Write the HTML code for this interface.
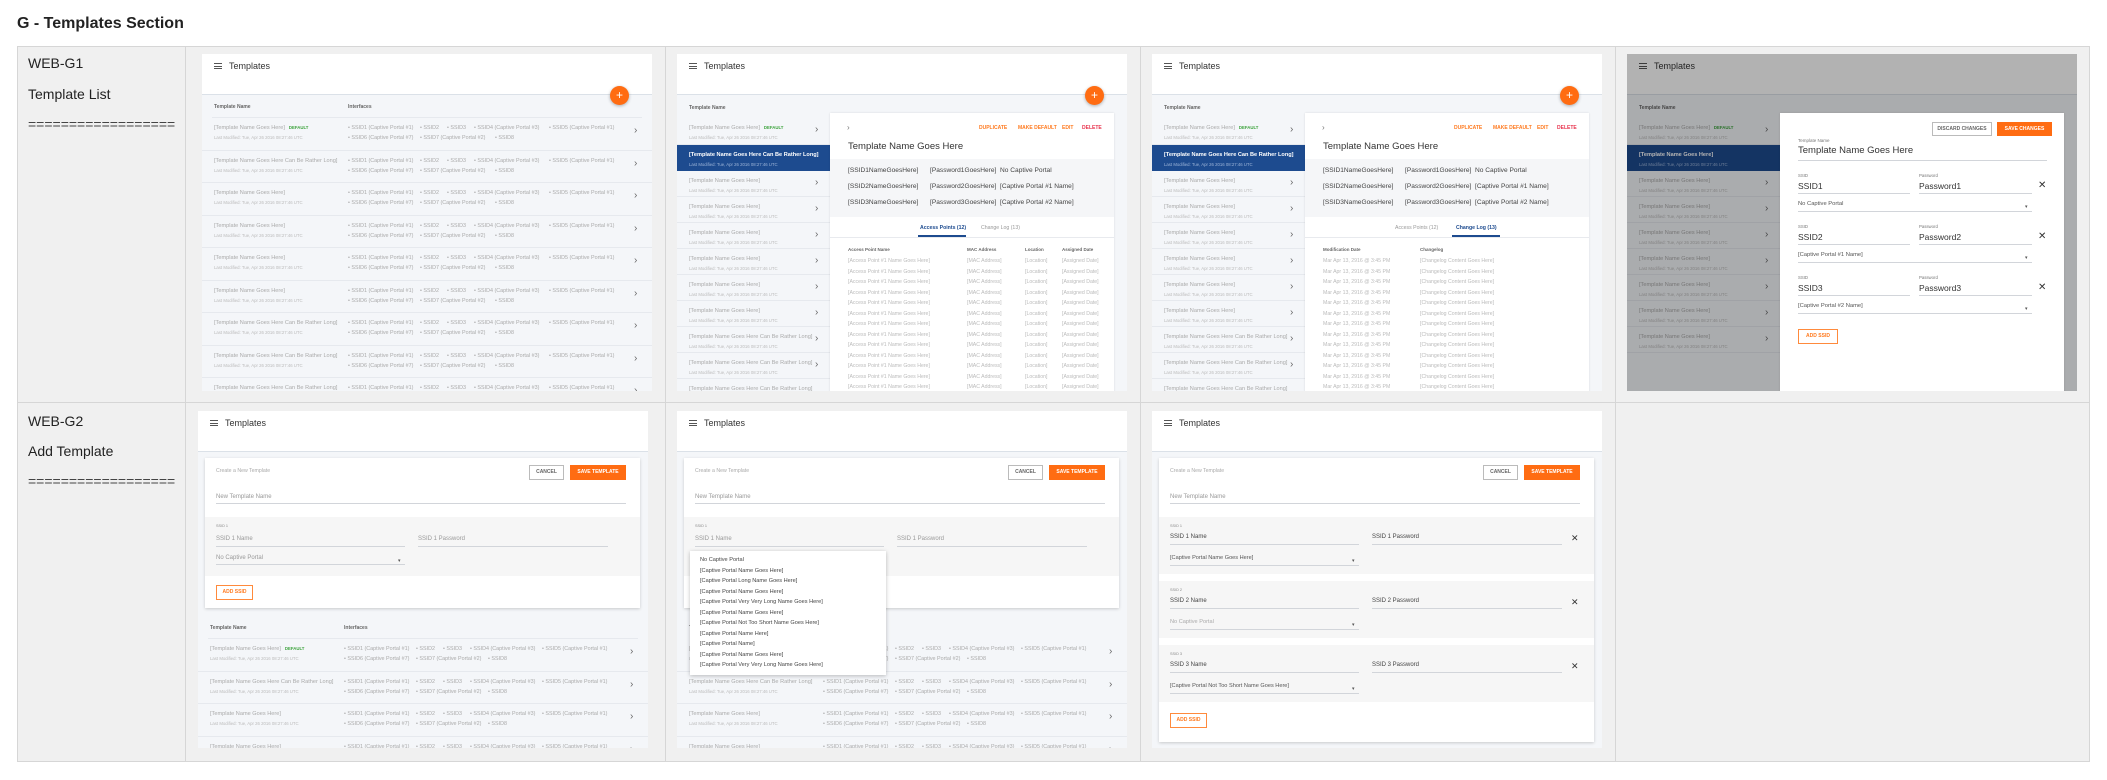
<!DOCTYPE html>
<html><head><meta charset="utf-8">
<style>
*{margin:0;padding:0;box-sizing:border-box}
body{width:2107px;height:780px;background:#fff;font-family:"Liberation Sans",Arial,sans-serif;position:relative;overflow:hidden;color:#333}
.a{position:absolute}
.t{position:absolute;white-space:nowrap;line-height:10px}
h1{position:absolute;left:17px;top:14px;font-size:16px;font-weight:bold;color:#222;line-height:20px}
.grid{position:absolute;left:17px;top:46px;width:2073px;height:716px;background:#f0f0f0;border:1px solid #d6d6d6}
.vl{position:absolute;top:46px;width:1px;height:716px;background:#d6d6d6}
.hl{position:absolute;left:17px;top:402px;width:2073px;height:1px;background:#d6d6d6}
.lab{position:absolute;left:28px;font-size:14px;color:#222;line-height:16px;white-space:nowrap}
.card{position:absolute;width:450px;height:337px;background:#f4f6f9;overflow:hidden}
.hd{position:absolute;left:0;top:0;width:450px;height:41px;background:#fff;border-bottom:1px solid #dbe1e8}
.hb{position:absolute;left:12px;top:9px;width:8px;height:6px;border-top:1px solid #555;border-bottom:1px solid #555}
.hb:after{content:"";position:absolute;left:0;top:2px;width:8px;height:1px;background:#555}
.ht{position:absolute;left:27px;top:6px;font-size:9px;color:#333;line-height:12px}
.fab{position:absolute;width:19px;height:19px;border-radius:50%;background:#ff6c12;color:#fff;font-size:12px;line-height:19px;text-align:center;box-shadow:0 1px 3px rgba(0,0,0,.3)}
.th{position:absolute;font-size:5px;font-weight:bold;color:#666;line-height:8px;white-space:nowrap}
.r{position:absolute;left:0;width:450px;height:32.5px;border-bottom:1px solid #e6e9ee}
.n{position:absolute;left:12px;top:5px;font-size:5.6px;color:#aaa;line-height:10px;white-space:nowrap}
.m{position:absolute;left:12px;top:15px;font-size:4.3px;color:#bbb;line-height:10px;white-space:nowrap}
.df{color:#3ca33c;font-weight:bold;font-size:4.3px;margin-left:4px}
.i1,.i2{position:absolute;left:146px;font-size:5.4px;color:#aaa;line-height:10px;white-space:nowrap}
.i1{top:5px}.i2{top:15px}
.i1 span,.i2 span{display:inline-block}
.ch{position:absolute;left:432px;top:8px;font-size:10px;color:#666;line-height:10px;font-style:normal}
.sr{position:absolute;left:0;width:153px;height:26px;border-bottom:1px solid #e6e9ee}
.sr .ch{left:138px;top:7px}
.sel{background:#1d4b8f;border:none}
.sel .n{color:#fff;font-weight:bold}.sel .m{color:#9fb6d9}
.pn{position:absolute;left:153px;top:59px;width:284px;height:290px;background:#fff;box-shadow:0 0 2px rgba(0,0,0,.12)}
.act{position:absolute;top:10px;font-size:5px;font-weight:bold;color:#ff7a1f;line-height:10px}
.gb{position:absolute;left:0;top:46px;width:284px;height:58px;background:#f5f6f8}
.s7{position:absolute;font-size:6.6px;color:#444;line-height:10px;white-space:nowrap}
.tab{position:absolute;top:110px;font-size:5.2px;color:#999;line-height:10px;white-space:nowrap}
.tr{position:absolute;font-size:5.2px;color:#bbb;line-height:10.5px;white-space:nowrap}
.btn{position:absolute;font-size:5px;font-weight:bold;text-align:center;line-height:13px;white-space:nowrap}
.bo{border:1px solid #bbb;color:#666;background:#fff}
.bf{background:#ff6c12;color:#fff;line-height:15px}
.bad{border:1px solid #ff8a3c;color:#ff7a1f;background:#fff}
.ul{position:absolute;height:1px;background:#d2d5da}
.x{position:absolute;font-size:10px;color:#333;line-height:10px}
.dd{position:absolute;font-size:5px;color:#555;line-height:6px}
.fc{position:absolute;left:7px;top:47px;width:435px;background:#fff;box-shadow:0 1px 3px rgba(0,0,0,.18)}
.gs{position:absolute;left:0;width:435px;background:#f6f6f6}
.menu{position:absolute;left:13px;top:140px;width:196px;height:124px;background:#fff;box-shadow:0 1px 4px rgba(0,0,0,.25);z-index:5}
.menu div{position:absolute;left:10px;font-size:5.6px;color:#444;line-height:10.5px;white-space:nowrap}
</style></head><body>
<h1>G - Templates Section</h1>
<div class="grid"></div>
<div class="vl" style="left:185px"></div>
<div class="vl" style="left:665px"></div>
<div class="vl" style="left:1140px"></div>
<div class="vl" style="left:1615px"></div>
<div class="hl"></div>
<div class="lab" style="top:55px">WEB-G1</div>
<div class="lab" style="top:86px">Template List</div>
<div class="lab" style="top:116px;color:#444">==================</div>
<div class="lab" style="top:413px">WEB-G2</div>
<div class="lab" style="top:443px">Add Template</div>
<div class="lab" style="top:473px;color:#444">==================</div>

<!-- ROW1 CARD1 -->
<div class="card" style="left:202px;top:54px">
<div class="hd"><div class="hb"></div><div class="ht">Templates</div></div>
<div class="fab" style="left:408px;top:32px">+</div>
<div class="th" style="left:12px;top:49px">Template Name</div><div class="th" style="left:146px;top:49px">Interfaces</div>
<div class="a" style="left:10px;top:63px;width:430px;height:1px;background:#e6e9ee"></div>
<div class="r" style="top:64px"><div class="n">[Template Name Goes Here]<span class="df">DEFAULT</span></div><div class="m">Last Modified: Tue, Apr 26 2016 08:27:46 UTC</div><div class="i1"><span style="width:72px">• SSID1 (Captive Portal #1)</span><span style="width:27px">• SSID2</span><span style="width:27px">• SSID3</span><span style="width:75px">• SSID4 (Captive Portal #3)</span><span>• SSID5 (Captive Portal #1)</span></div><div class="i2"><span style="width:72px">• SSID6 (Captive Portal #7)</span><span style="width:75px">• SSID7 (Captive Portal #2)</span><span>• SSID8</span></div><i class="ch">›</i></div>
<div class="r" style="top:96.5px"><div class="n">[Template Name Goes Here Can Be Rather Long]</div><div class="m">Last Modified: Tue, Apr 26 2016 08:27:46 UTC</div><div class="i1"><span style="width:72px">• SSID1 (Captive Portal #1)</span><span style="width:27px">• SSID2</span><span style="width:27px">• SSID3</span><span style="width:75px">• SSID4 (Captive Portal #3)</span><span>• SSID5 (Captive Portal #1)</span></div><div class="i2"><span style="width:72px">• SSID6 (Captive Portal #7)</span><span style="width:75px">• SSID7 (Captive Portal #2)</span><span>• SSID8</span></div><i class="ch">›</i></div>
<div class="r" style="top:129px"><div class="n">[Template Name Goes Here]</div><div class="m">Last Modified: Tue, Apr 26 2016 08:27:46 UTC</div><div class="i1"><span style="width:72px">• SSID1 (Captive Portal #1)</span><span style="width:27px">• SSID2</span><span style="width:27px">• SSID3</span><span style="width:75px">• SSID4 (Captive Portal #3)</span><span>• SSID5 (Captive Portal #1)</span></div><div class="i2"><span style="width:72px">• SSID6 (Captive Portal #7)</span><span style="width:75px">• SSID7 (Captive Portal #2)</span><span>• SSID8</span></div><i class="ch">›</i></div>
<div class="r" style="top:161.5px"><div class="n">[Template Name Goes Here]</div><div class="m">Last Modified: Tue, Apr 26 2016 08:27:46 UTC</div><div class="i1"><span style="width:72px">• SSID1 (Captive Portal #1)</span><span style="width:27px">• SSID2</span><span style="width:27px">• SSID3</span><span style="width:75px">• SSID4 (Captive Portal #3)</span><span>• SSID5 (Captive Portal #1)</span></div><div class="i2"><span style="width:72px">• SSID6 (Captive Portal #7)</span><span style="width:75px">• SSID7 (Captive Portal #2)</span><span>• SSID8</span></div><i class="ch">›</i></div>
<div class="r" style="top:194px"><div class="n">[Template Name Goes Here]</div><div class="m">Last Modified: Tue, Apr 26 2016 08:27:46 UTC</div><div class="i1"><span style="width:72px">• SSID1 (Captive Portal #1)</span><span style="width:27px">• SSID2</span><span style="width:27px">• SSID3</span><span style="width:75px">• SSID4 (Captive Portal #3)</span><span>• SSID5 (Captive Portal #1)</span></div><div class="i2"><span style="width:72px">• SSID6 (Captive Portal #7)</span><span style="width:75px">• SSID7 (Captive Portal #2)</span><span>• SSID8</span></div><i class="ch">›</i></div>
<div class="r" style="top:226.5px"><div class="n">[Template Name Goes Here]</div><div class="m">Last Modified: Tue, Apr 26 2016 08:27:46 UTC</div><div class="i1"><span style="width:72px">• SSID1 (Captive Portal #1)</span><span style="width:27px">• SSID2</span><span style="width:27px">• SSID3</span><span style="width:75px">• SSID4 (Captive Portal #3)</span><span>• SSID5 (Captive Portal #1)</span></div><div class="i2"><span style="width:72px">• SSID6 (Captive Portal #7)</span><span style="width:75px">• SSID7 (Captive Portal #2)</span><span>• SSID8</span></div><i class="ch">›</i></div>
<div class="r" style="top:259px"><div class="n">[Template Name Goes Here Can Be Rather Long]</div><div class="m">Last Modified: Tue, Apr 26 2016 08:27:46 UTC</div><div class="i1"><span style="width:72px">• SSID1 (Captive Portal #1)</span><span style="width:27px">• SSID2</span><span style="width:27px">• SSID3</span><span style="width:75px">• SSID4 (Captive Portal #3)</span><span>• SSID5 (Captive Portal #1)</span></div><div class="i2"><span style="width:72px">• SSID6 (Captive Portal #7)</span><span style="width:75px">• SSID7 (Captive Portal #2)</span><span>• SSID8</span></div><i class="ch">›</i></div>
<div class="r" style="top:291.5px"><div class="n">[Template Name Goes Here Can Be Rather Long]</div><div class="m">Last Modified: Tue, Apr 26 2016 08:27:46 UTC</div><div class="i1"><span style="width:72px">• SSID1 (Captive Portal #1)</span><span style="width:27px">• SSID2</span><span style="width:27px">• SSID3</span><span style="width:75px">• SSID4 (Captive Portal #3)</span><span>• SSID5 (Captive Portal #1)</span></div><div class="i2"><span style="width:72px">• SSID6 (Captive Portal #7)</span><span style="width:75px">• SSID7 (Captive Portal #2)</span><span>• SSID8</span></div><i class="ch">›</i></div>
<div class="r" style="top:324px"><div class="n">[Template Name Goes Here Can Be Rather Long]</div><div class="i1"><span style="width:72px">• SSID1 (Captive Portal #1)</span><span style="width:27px">• SSID2</span><span style="width:27px">• SSID3</span><span style="width:75px">• SSID4 (Captive Portal #3)</span><span>• SSID5 (Captive Portal #1)</span></div><i class="ch">›</i></div>
</div>

<!-- ROW1 CARD2 -->
<div class="card" style="left:677px;top:54px">
<div class="hd"><div class="hb"></div><div class="ht">Templates</div></div>
<div class="th" style="left:12px;top:50px">Template Name</div>
<div class="sr" style="top:64px;height:27px"><div class="n">[Template Name Goes Here]<span class="df">DEFAULT</span></div><div class="m">Last Modified: Tue, Apr 26 2016 08:27:46 UTC</div><i class="ch">›</i></div>
<div class="sr sel" style="top:91px"><div class="n">[Template Name Goes Here  Can Be Rather Long]</div><div class="m">Last Modified: Tue, Apr 26 2016 08:27:46 UTC</div></div>
<div class="sr" style="top:117px"><div class="n">[Template Name Goes Here]</div><div class="m">Last Modified: Tue, Apr 26 2016 08:27:46 UTC</div><i class="ch">›</i></div>
<div class="sr" style="top:143px"><div class="n">[Template Name Goes Here]</div><div class="m">Last Modified: Tue, Apr 26 2016 08:27:46 UTC</div><i class="ch">›</i></div>
<div class="sr" style="top:169px"><div class="n">[Template Name Goes Here]</div><div class="m">Last Modified: Tue, Apr 26 2016 08:27:46 UTC</div><i class="ch">›</i></div>
<div class="sr" style="top:195px"><div class="n">[Template Name Goes Here]</div><div class="m">Last Modified: Tue, Apr 26 2016 08:27:46 UTC</div><i class="ch">›</i></div>
<div class="sr" style="top:221px"><div class="n">[Template Name Goes Here]</div><div class="m">Last Modified: Tue, Apr 26 2016 08:27:46 UTC</div><i class="ch">›</i></div>
<div class="sr" style="top:247px"><div class="n">[Template Name Goes Here]</div><div class="m">Last Modified: Tue, Apr 26 2016 08:27:46 UTC</div><i class="ch">›</i></div>
<div class="sr" style="top:273px"><div class="n">[Template Name Goes Here Can Be Rather Long]</div><div class="m">Last Modified: Tue, Apr 26 2016 08:27:46 UTC</div><i class="ch">›</i></div>
<div class="sr" style="top:299px"><div class="n">[Template Name Goes Here Can Be Rather Long]</div><div class="m">Last Modified: Tue, Apr 26 2016 08:27:46 UTC</div><i class="ch">›</i></div>
<div class="sr" style="top:325px"><div class="n">[Template Name Goes Here Can Be Rather Long]</div></div>
<div class="pn">
<div class="t" style="left:17px;top:10px;font-size:8px;color:#777">›</div>
<div class="act" style="left:149px">DUPLICATE</div><div class="act" style="left:188px">MAKE DEFAULT</div><div class="act" style="left:232px">EDIT</div><div class="act" style="left:252px;color:#e8344e">DELETE</div>
<div class="t" style="left:18px;top:28px;font-size:9.5px;color:#333;line-height:12px">Template Name Goes Here</div>
<div class="gb"></div>
<div class="s7" style="left:18px;top:53px">[SSID1NameGoesHere]</div><div class="s7" style="left:100px;top:53px">[Password1GoesHere]</div><div class="s7" style="left:170px;top:53px">No Captive Portal</div>
<div class="s7" style="left:18px;top:69px">[SSID2NameGoesHere]</div><div class="s7" style="left:100px;top:69px">[Password2GoesHere]</div><div class="s7" style="left:170px;top:69px">[Captive Portal #1 Name]</div>
<div class="s7" style="left:18px;top:85px">[SSID3NameGoesHere]</div><div class="s7" style="left:100px;top:85px">[Password3GoesHere]</div><div class="s7" style="left:170px;top:85px">[Captive Portal #2 Name]</div>
<div class="tab" style="left:90px;color:#1d4b8f;font-weight:bold">Access Points (12)</div><div class="tab" style="left:151px">Change Log (13)</div>
<div class="a" style="left:0;top:124px;width:284px;height:1px;background:#e8eaee"></div>
<div class="a" style="left:88px;top:122px;width:48px;height:2px;background:#1d4b8f"></div>
<div class="th" style="left:18px;top:133px;font-size:4.5px">Access Point Name</div><div class="th" style="left:137px;top:133px;font-size:4.5px">MAC Address</div><div class="th" style="left:195px;top:133px;font-size:4.5px">Location</div><div class="th" style="left:232px;top:133px;font-size:4.5px">Assigned Date</div>
<div class="tr" style="left:18px;top:143px">[Access Point #1 Name Goes Here]<br>[Access Point #1 Name Goes Here]<br>[Access Point #1 Name Goes Here]<br>[Access Point #1 Name Goes Here]<br>[Access Point #1 Name Goes Here]<br>[Access Point #1 Name Goes Here]<br>[Access Point #1 Name Goes Here]<br>[Access Point #1 Name Goes Here]<br>[Access Point #1 Name Goes Here]<br>[Access Point #1 Name Goes Here]<br>[Access Point #1 Name Goes Here]<br>[Access Point #1 Name Goes Here]<br>[Access Point #1 Name Goes Here]</div>
<div class="tr" style="left:137px;top:143px">[MAC Address]<br>[MAC Address]<br>[MAC Address]<br>[MAC Address]<br>[MAC Address]<br>[MAC Address]<br>[MAC Address]<br>[MAC Address]<br>[MAC Address]<br>[MAC Address]<br>[MAC Address]<br>[MAC Address]<br>[MAC Address]</div>
<div class="tr" style="left:195px;top:143px">[Location]<br>[Location]<br>[Location]<br>[Location]<br>[Location]<br>[Location]<br>[Location]<br>[Location]<br>[Location]<br>[Location]<br>[Location]<br>[Location]<br>[Location]</div>
<div class="tr" style="left:232px;top:143px">[Assigned Date]<br>[Assigned Date]<br>[Assigned Date]<br>[Assigned Date]<br>[Assigned Date]<br>[Assigned Date]<br>[Assigned Date]<br>[Assigned Date]<br>[Assigned Date]<br>[Assigned Date]<br>[Assigned Date]<br>[Assigned Date]<br>[Assigned Date]</div>
</div>
<div class="fab" style="left:408px;top:32px">+</div>
</div>

<!-- ROW1 CARD3 -->
<div class="card" style="left:1152px;top:54px">
<div class="hd"><div class="hb"></div><div class="ht">Templates</div></div>
<div class="th" style="left:12px;top:50px">Template Name</div>
<div class="sr" style="top:64px;height:27px"><div class="n">[Template Name Goes Here]<span class="df">DEFAULT</span></div><div class="m">Last Modified: Tue, Apr 26 2016 08:27:46 UTC</div><i class="ch">›</i></div>
<div class="sr sel" style="top:91px"><div class="n">[Template Name Goes Here  Can Be Rather Long]</div><div class="m">Last Modified: Tue, Apr 26 2016 08:27:46 UTC</div></div>
<div class="sr" style="top:117px"><div class="n">[Template Name Goes Here]</div><div class="m">Last Modified: Tue, Apr 26 2016 08:27:46 UTC</div><i class="ch">›</i></div>
<div class="sr" style="top:143px"><div class="n">[Template Name Goes Here]</div><div class="m">Last Modified: Tue, Apr 26 2016 08:27:46 UTC</div><i class="ch">›</i></div>
<div class="sr" style="top:169px"><div class="n">[Template Name Goes Here]</div><div class="m">Last Modified: Tue, Apr 26 2016 08:27:46 UTC</div><i class="ch">›</i></div>
<div class="sr" style="top:195px"><div class="n">[Template Name Goes Here]</div><div class="m">Last Modified: Tue, Apr 26 2016 08:27:46 UTC</div><i class="ch">›</i></div>
<div class="sr" style="top:221px"><div class="n">[Template Name Goes Here]</div><div class="m">Last Modified: Tue, Apr 26 2016 08:27:46 UTC</div><i class="ch">›</i></div>
<div class="sr" style="top:247px"><div class="n">[Template Name Goes Here]</div><div class="m">Last Modified: Tue, Apr 26 2016 08:27:46 UTC</div><i class="ch">›</i></div>
<div class="sr" style="top:273px"><div class="n">[Template Name Goes Here Can Be Rather Long]</div><div class="m">Last Modified: Tue, Apr 26 2016 08:27:46 UTC</div><i class="ch">›</i></div>
<div class="sr" style="top:299px"><div class="n">[Template Name Goes Here Can Be Rather Long]</div><div class="m">Last Modified: Tue, Apr 26 2016 08:27:46 UTC</div><i class="ch">›</i></div>
<div class="sr" style="top:325px"><div class="n">[Template Name Goes Here Can Be Rather Long]</div></div>
<div class="pn">
<div class="t" style="left:17px;top:10px;font-size:8px;color:#777">›</div>
<div class="act" style="left:149px">DUPLICATE</div><div class="act" style="left:188px">MAKE DEFAULT</div><div class="act" style="left:232px">EDIT</div><div class="act" style="left:252px;color:#e8344e">DELETE</div>
<div class="t" style="left:18px;top:28px;font-size:9.5px;color:#333;line-height:12px">Template Name Goes Here</div>
<div class="gb"></div>
<div class="s7" style="left:18px;top:53px">[SSID1NameGoesHere]</div><div class="s7" style="left:100px;top:53px">[Password1GoesHere]</div><div class="s7" style="left:170px;top:53px">No Captive Portal</div>
<div class="s7" style="left:18px;top:69px">[SSID2NameGoesHere]</div><div class="s7" style="left:100px;top:69px">[Password2GoesHere]</div><div class="s7" style="left:170px;top:69px">[Captive Portal #1 Name]</div>
<div class="s7" style="left:18px;top:85px">[SSID3NameGoesHere]</div><div class="s7" style="left:100px;top:85px">[Password3GoesHere]</div><div class="s7" style="left:170px;top:85px">[Captive Portal #2 Name]</div>
<div class="tab" style="left:90px">Access Points (12)</div><div class="tab" style="left:151px;color:#1d4b8f;font-weight:bold">Change Log (13)</div>
<div class="a" style="left:0;top:124px;width:284px;height:1px;background:#e8eaee"></div>
<div class="a" style="left:147px;top:122px;width:48px;height:2px;background:#1d4b8f"></div>
<div class="th" style="left:18px;top:133px;font-size:4.5px">Modification Date</div><div class="th" style="left:115px;top:133px;font-size:4.5px">Changelog</div>
<div class="tr" style="left:18px;top:143px">Mar Apr 13, 2916 @ 3:45 PM<br>Mar Apr 13, 2916 @ 3:45 PM<br>Mar Apr 13, 2916 @ 3:45 PM<br>Mar Apr 13, 2916 @ 3:45 PM<br>Mar Apr 13, 2916 @ 3:45 PM<br>Mar Apr 13, 2916 @ 3:45 PM<br>Mar Apr 13, 2916 @ 3:45 PM<br>Mar Apr 13, 2916 @ 3:45 PM<br>Mar Apr 13, 2916 @ 3:45 PM<br>Mar Apr 13, 2916 @ 3:45 PM<br>Mar Apr 13, 2916 @ 3:45 PM<br>Mar Apr 13, 2916 @ 3:45 PM<br>Mar Apr 13, 2916 @ 3:45 PM</div>
<div class="tr" style="left:115px;top:143px">[Changelog Content Goes Here]<br>[Changelog Content Goes Here]<br>[Changelog Content Goes Here]<br>[Changelog Content Goes Here]<br>[Changelog Content Goes Here]<br>[Changelog Content Goes Here]<br>[Changelog Content Goes Here]<br>[Changelog Content Goes Here]<br>[Changelog Content Goes Here]<br>[Changelog Content Goes Here]<br>[Changelog Content Goes Here]<br>[Changelog Content Goes Here]<br>[Changelog Content Goes Here]</div>
</div>
<div class="fab" style="left:408px;top:32px">+</div>
</div>

<!-- ROW1 CARD4 -->
<div class="card" style="left:1627px;top:54px">
<div class="hd"><div class="hb"></div><div class="ht">Templates</div></div>
<div class="th" style="left:12px;top:50px">Template Name</div>
<div class="sr" style="top:64px;height:27px"><div class="n">[Template Name Goes Here]<span class="df">DEFAULT</span></div><div class="m">Last Modified: Tue, Apr 26 2016 08:27:46 UTC</div><i class="ch">›</i></div>
<div class="sr sel" style="top:91px"><div class="n">[Template Name Goes Here]</div><div class="m">Last Modified: Tue, Apr 26 2016 08:27:46 UTC</div></div>
<div class="sr" style="top:117px"><div class="n">[Template Name Goes Here]</div><div class="m">Last Modified: Tue, Apr 26 2016 08:27:46 UTC</div><i class="ch">›</i></div>
<div class="sr" style="top:143px"><div class="n">[Template Name Goes Here]</div><div class="m">Last Modified: Tue, Apr 26 2016 08:27:46 UTC</div><i class="ch">›</i></div>
<div class="sr" style="top:169px"><div class="n">[Template Name Goes Here]</div><div class="m">Last Modified: Tue, Apr 26 2016 08:27:46 UTC</div><i class="ch">›</i></div>
<div class="sr" style="top:195px"><div class="n">[Template Name Goes Here]</div><div class="m">Last Modified: Tue, Apr 26 2016 08:27:46 UTC</div><i class="ch">›</i></div>
<div class="sr" style="top:221px"><div class="n">[Template Name Goes Here]</div><div class="m">Last Modified: Tue, Apr 26 2016 08:27:46 UTC</div><i class="ch">›</i></div>
<div class="sr" style="top:247px"><div class="n">[Template Name Goes Here]</div><div class="m">Last Modified: Tue, Apr 26 2016 08:27:46 UTC</div><i class="ch">›</i></div>
<div class="sr" style="top:273px"><div class="n">[Template Name Goes Here]</div><div class="m">Last Modified: Tue, Apr 26 2016 08:27:46 UTC</div><i class="ch">›</i></div>
<div class="a" style="left:0;top:0;width:450px;height:337px;background:rgba(0,0,0,.3)"></div>
<div class="pn" style="z-index:3">
<div class="btn bo" style="left:152px;top:9px;width:60px;height:14px">DISCARD CHANGES</div>
<div class="btn bf" style="left:217px;top:9px;width:55px;height:14px;line-height:14px">SAVE CHANGES</div>
<div class="t" style="left:18px;top:23px;font-size:4.5px;color:#777">Template Name</div>
<div class="t" style="left:18px;top:32px;font-size:9.5px;color:#333;line-height:12px">Template Name Goes Here</div>
<div class="ul" style="left:18px;top:47px;width:249px"></div>

<div class="t" style="left:18px;top:58px;font-size:4.3px;color:#777">SSID</div><div class="t" style="left:139px;top:58px;font-size:4.3px;color:#777">Password</div>
<div class="t" style="left:18px;top:68px;font-size:8.5px;color:#333">SSID1</div><div class="t" style="left:139px;top:68px;font-size:8.5px;color:#333">Password1</div>
<div class="ul" style="left:18px;top:80px;width:112px"></div><div class="ul" style="left:139px;top:80px;width:113px"></div>
<div class="x" style="left:258px;top:68px">✕</div>
<div class="t" style="left:18px;top:86px;font-size:5.8px;color:#555">No Captive Portal</div><div class="dd" style="left:245px;top:91px">▾</div>
<div class="ul" style="left:18px;top:98px;width:234px"></div>

<div class="t" style="left:18px;top:109px;font-size:4.3px;color:#777">SSID</div><div class="t" style="left:139px;top:109px;font-size:4.3px;color:#777">Password</div>
<div class="t" style="left:18px;top:119px;font-size:8.5px;color:#333">SSID2</div><div class="t" style="left:139px;top:119px;font-size:8.5px;color:#333">Password2</div>
<div class="ul" style="left:18px;top:131px;width:112px"></div><div class="ul" style="left:139px;top:131px;width:113px"></div>
<div class="x" style="left:258px;top:119px">✕</div>
<div class="t" style="left:18px;top:137px;font-size:5.8px;color:#555">[Captive Portal #1 Name]</div><div class="dd" style="left:245px;top:142px">▾</div>
<div class="ul" style="left:18px;top:149px;width:234px"></div>

<div class="t" style="left:18px;top:160px;font-size:4.3px;color:#777">SSID</div><div class="t" style="left:139px;top:160px;font-size:4.3px;color:#777">Password</div>
<div class="t" style="left:18px;top:170px;font-size:8.5px;color:#333">SSID3</div><div class="t" style="left:139px;top:170px;font-size:8.5px;color:#333">Password3</div>
<div class="ul" style="left:18px;top:182px;width:112px"></div><div class="ul" style="left:139px;top:182px;width:113px"></div>
<div class="x" style="left:258px;top:170px">✕</div>
<div class="t" style="left:18px;top:188px;font-size:5.8px;color:#555">[Captive Portal #2 Name]</div><div class="dd" style="left:245px;top:193px">▾</div>
<div class="ul" style="left:18px;top:200px;width:234px"></div>
<div class="btn bad" style="left:18px;top:216px;width:40px;height:15px">ADD SSID</div>
</div>
</div>

<!-- ROW2 CARD1 -->
<div class="card" style="left:198px;top:411px">
<div class="hd"><div class="hb"></div><div class="ht">Templates</div></div>
<div class="fc" style="height:150px">
<div class="t" style="left:11px;top:8px;font-size:5.2px;color:#aaa">Create a New Template</div>
<div class="btn bo" style="left:324px;top:7px;width:35px;height:15px">CANCEL</div>
<div class="btn bf" style="left:365px;top:7px;width:56px;height:15px">SAVE TEMPLATE</div>
<div class="t" style="left:11px;top:34px;font-size:6px;color:#999">New Template Name</div>
<div class="ul" style="left:11px;top:45px;width:410px"></div>
<div class="gs" style="top:59px;height:59px">
<div class="t" style="left:11px;top:4px;font-size:3.8px;color:#888">SSID 1</div>
<div class="t" style="left:11px;top:17px;font-size:6px;color:#999">SSID 1 Name</div><div class="t" style="left:213px;top:17px;font-size:6px;color:#999">SSID 1 Password</div>
<div class="ul" style="left:11px;top:29px;width:189px"></div><div class="ul" style="left:213px;top:29px;width:190px"></div>
<div class="t" style="left:11px;top:36px;font-size:6px;color:#999">No Captive Portal</div><div class="dd" style="left:193px;top:41px">▾</div>
<div class="ul" style="left:11px;top:47px;width:189px"></div>
</div>
<div class="btn bad" style="left:11px;top:127px;width:37px;height:15px">ADD SSID</div>
</div>
<div class="th" style="left:12px;top:213px">Template Name</div><div class="th" style="left:146px;top:213px">Interfaces</div>
<div class="a" style="left:10px;top:227px;width:430px;height:1px;background:#e6e9ee"></div>
<div class="r" style="top:228px"><div class="n">[Template Name Goes Here]<span class="df">DEFAULT</span></div><div class="m">Last Modified: Tue, Apr 26 2016 08:27:46 UTC</div><div class="i1"><span style="width:72px">• SSID1 (Captive Portal #1)</span><span style="width:27px">• SSID2</span><span style="width:27px">• SSID3</span><span style="width:72px">• SSID4 (Captive Portal #3)</span><span>• SSID5 (Captive Portal #1)</span></div><div class="i2"><span style="width:72px">• SSID6 (Captive Portal #7)</span><span style="width:72px">• SSID7 (Captive Portal #2)</span><span>• SSID8</span></div><i class="ch">›</i></div>
<div class="r" style="top:260.5px"><div class="n">[Template Name Goes Here Can Be Rather Long]</div><div class="m">Last Modified: Tue, Apr 26 2016 08:27:46 UTC</div><div class="i1"><span style="width:72px">• SSID1 (Captive Portal #1)</span><span style="width:27px">• SSID2</span><span style="width:27px">• SSID3</span><span style="width:72px">• SSID4 (Captive Portal #3)</span><span>• SSID5 (Captive Portal #1)</span></div><div class="i2"><span style="width:72px">• SSID6 (Captive Portal #7)</span><span style="width:72px">• SSID7 (Captive Portal #2)</span><span>• SSID8</span></div><i class="ch">›</i></div>
<div class="r" style="top:293px"><div class="n">[Template Name Goes Here]</div><div class="m">Last Modified: Tue, Apr 26 2016 08:27:46 UTC</div><div class="i1"><span style="width:72px">• SSID1 (Captive Portal #1)</span><span style="width:27px">• SSID2</span><span style="width:27px">• SSID3</span><span style="width:72px">• SSID4 (Captive Portal #3)</span><span>• SSID5 (Captive Portal #1)</span></div><div class="i2"><span style="width:72px">• SSID6 (Captive Portal #7)</span><span style="width:72px">• SSID7 (Captive Portal #2)</span><span>• SSID8</span></div><i class="ch">›</i></div>
<div class="r" style="top:325.5px"><div class="n">[Template Name Goes Here]</div><div class="i1"><span style="width:72px">• SSID1 (Captive Portal #1)</span><span style="width:27px">• SSID2</span><span style="width:27px">• SSID3</span><span style="width:72px">• SSID4 (Captive Portal #3)</span><span>• SSID5 (Captive Portal #1)</span></div><i class="ch">›</i></div>
</div>

<!-- ROW2 CARD2 -->
<div class="card" style="left:677px;top:411px">
<div class="hd"><div class="hb"></div><div class="ht">Templates</div></div>
<div class="fc" style="height:150px">
<div class="t" style="left:11px;top:8px;font-size:5.2px;color:#aaa">Create a New Template</div>
<div class="btn bo" style="left:324px;top:7px;width:35px;height:15px">CANCEL</div>
<div class="btn bf" style="left:365px;top:7px;width:56px;height:15px">SAVE TEMPLATE</div>
<div class="t" style="left:11px;top:34px;font-size:6px;color:#999">New Template Name</div>
<div class="ul" style="left:11px;top:45px;width:410px"></div>
<div class="gs" style="top:59px;height:59px">
<div class="t" style="left:11px;top:4px;font-size:3.8px;color:#888">SSID 1</div>
<div class="t" style="left:11px;top:17px;font-size:6px;color:#999">SSID 1 Name</div><div class="t" style="left:213px;top:17px;font-size:6px;color:#999">SSID 1 Password</div>
<div class="ul" style="left:11px;top:29px;width:189px"></div><div class="ul" style="left:213px;top:29px;width:190px"></div>
</div>
<div class="btn bad" style="left:11px;top:127px;width:37px;height:15px">ADD SSID</div>
</div>
<div class="th" style="left:12px;top:213px">Template Name</div><div class="th" style="left:146px;top:213px">Interfaces</div>
<div class="r" style="top:228px"><div class="n">[Template Name Goes Here]<span class="df">DEFAULT</span></div><div class="m">Last Modified: Tue, Apr 26 2016 08:27:46 UTC</div><div class="i1"><span style="width:72px">• SSID1 (Captive Portal #1)</span><span style="width:27px">• SSID2</span><span style="width:27px">• SSID3</span><span style="width:72px">• SSID4 (Captive Portal #3)</span><span>• SSID5 (Captive Portal #1)</span></div><div class="i2"><span style="width:72px">• SSID6 (Captive Portal #7)</span><span style="width:72px">• SSID7 (Captive Portal #2)</span><span>• SSID8</span></div><i class="ch">›</i></div>
<div class="r" style="top:260.5px"><div class="n">[Template Name Goes Here Can Be Rather Long]</div><div class="m">Last Modified: Tue, Apr 26 2016 08:27:46 UTC</div><div class="i1"><span style="width:72px">• SSID1 (Captive Portal #1)</span><span style="width:27px">• SSID2</span><span style="width:27px">• SSID3</span><span style="width:72px">• SSID4 (Captive Portal #3)</span><span>• SSID5 (Captive Portal #1)</span></div><div class="i2"><span style="width:72px">• SSID6 (Captive Portal #7)</span><span style="width:72px">• SSID7 (Captive Portal #2)</span><span>• SSID8</span></div><i class="ch">›</i></div>
<div class="r" style="top:293px"><div class="n">[Template Name Goes Here]</div><div class="m">Last Modified: Tue, Apr 26 2016 08:27:46 UTC</div><div class="i1"><span style="width:72px">• SSID1 (Captive Portal #1)</span><span style="width:27px">• SSID2</span><span style="width:27px">• SSID3</span><span style="width:72px">• SSID4 (Captive Portal #3)</span><span>• SSID5 (Captive Portal #1)</span></div><div class="i2"><span style="width:72px">• SSID6 (Captive Portal #7)</span><span style="width:72px">• SSID7 (Captive Portal #2)</span><span>• SSID8</span></div><i class="ch">›</i></div>
<div class="r" style="top:325.5px"><div class="n">[Template Name Goes Here]</div><div class="i1"><span style="width:72px">• SSID1 (Captive Portal #1)</span><span style="width:27px">• SSID2</span><span style="width:27px">• SSID3</span><span style="width:72px">• SSID4 (Captive Portal #3)</span><span>• SSID5 (Captive Portal #1)</span></div><i class="ch">›</i></div>
<div class="menu">
<div style="top:4px">No Captive Portal</div>
<div style="top:14.5px">[Captive Portal Name Goes Here]</div>
<div style="top:25px">[Captive Portal Long Name Goes Here]</div>
<div style="top:35.5px">[Captive Portal Name Goes Here]</div>
<div style="top:46px">[Captive Portal Very Very Long Name Goes Here]</div>
<div style="top:56.5px">[Captive Portal Name Goes Here]</div>
<div style="top:67px">[Captive Portal Not Too Short Name Goes Here]</div>
<div style="top:77.5px">[Captive Portal Name Here]</div>
<div style="top:88px">[Captive Portal Name]</div>
<div style="top:98.5px">[Captive Portal Name Goes Here]</div>
<div style="top:109px">[Captive Portal Very Very Long Name Goes Here]</div>
</div>
</div>

<!-- ROW2 CARD3 -->
<div class="card" style="left:1152px;top:411px">
<div class="hd"><div class="hb"></div><div class="ht">Templates</div></div>
<div class="fc" style="height:284px">
<div class="t" style="left:11px;top:8px;font-size:5.2px;color:#aaa">Create a New Template</div>
<div class="btn bo" style="left:324px;top:7px;width:35px;height:15px">CANCEL</div>
<div class="btn bf" style="left:365px;top:7px;width:56px;height:15px">SAVE TEMPLATE</div>
<div class="t" style="left:11px;top:34px;font-size:6px;color:#999">New Template Name</div>
<div class="ul" style="left:11px;top:45px;width:410px"></div>
<div class="gs" style="top:59px;height:57px">
<div class="t" style="left:11px;top:4px;font-size:3.8px;color:#888">SSID 1</div>
<div class="t" style="left:11px;top:15px;font-size:6px;color:#444">SSID 1 Name</div><div class="t" style="left:213px;top:15px;font-size:6px;color:#444">SSID 1 Password</div>
<div class="ul" style="left:11px;top:27px;width:189px"></div><div class="ul" style="left:213px;top:27px;width:190px"></div>
<div class="x" style="left:412px;top:16px;font-size:9px">✕</div>
<div class="t" style="left:11px;top:36px;font-size:5.6px;color:#555">[Captive Portal Name Goes Here]</div><div class="dd" style="left:193px;top:41px">▾</div>
<div class="ul" style="left:11px;top:48px;width:189px"></div>
</div>
<div class="gs" style="top:123px;height:57px">
<div class="t" style="left:11px;top:4px;font-size:3.8px;color:#888">SSID 2</div>
<div class="t" style="left:11px;top:15px;font-size:6px;color:#444">SSID 2 Name</div><div class="t" style="left:213px;top:15px;font-size:6px;color:#444">SSID 2 Password</div>
<div class="ul" style="left:11px;top:27px;width:189px"></div><div class="ul" style="left:213px;top:27px;width:190px"></div>
<div class="x" style="left:412px;top:16px;font-size:9px">✕</div>
<div class="t" style="left:11px;top:36px;font-size:5.6px;color:#aaa">No Captive Portal</div><div class="dd" style="left:193px;top:41px">▾</div>
<div class="ul" style="left:11px;top:48px;width:189px"></div>
</div>
<div class="gs" style="top:187px;height:57px">
<div class="t" style="left:11px;top:4px;font-size:3.8px;color:#888">SSID 3</div>
<div class="t" style="left:11px;top:15px;font-size:6px;color:#444">SSID 3 Name</div><div class="t" style="left:213px;top:15px;font-size:6px;color:#444">SSID 3 Password</div>
<div class="ul" style="left:11px;top:27px;width:189px"></div><div class="ul" style="left:213px;top:27px;width:190px"></div>
<div class="x" style="left:412px;top:16px;font-size:9px">✕</div>
<div class="t" style="left:11px;top:36px;font-size:5.6px;color:#555">[Captive Portal Not Too Short Name Goes Here]</div><div class="dd" style="left:193px;top:41px">▾</div>
<div class="ul" style="left:11px;top:48px;width:189px"></div>
</div>
<div class="btn bad" style="left:11px;top:255px;width:37px;height:15px">ADD SSID</div>
</div>
</div>
</body></html>
